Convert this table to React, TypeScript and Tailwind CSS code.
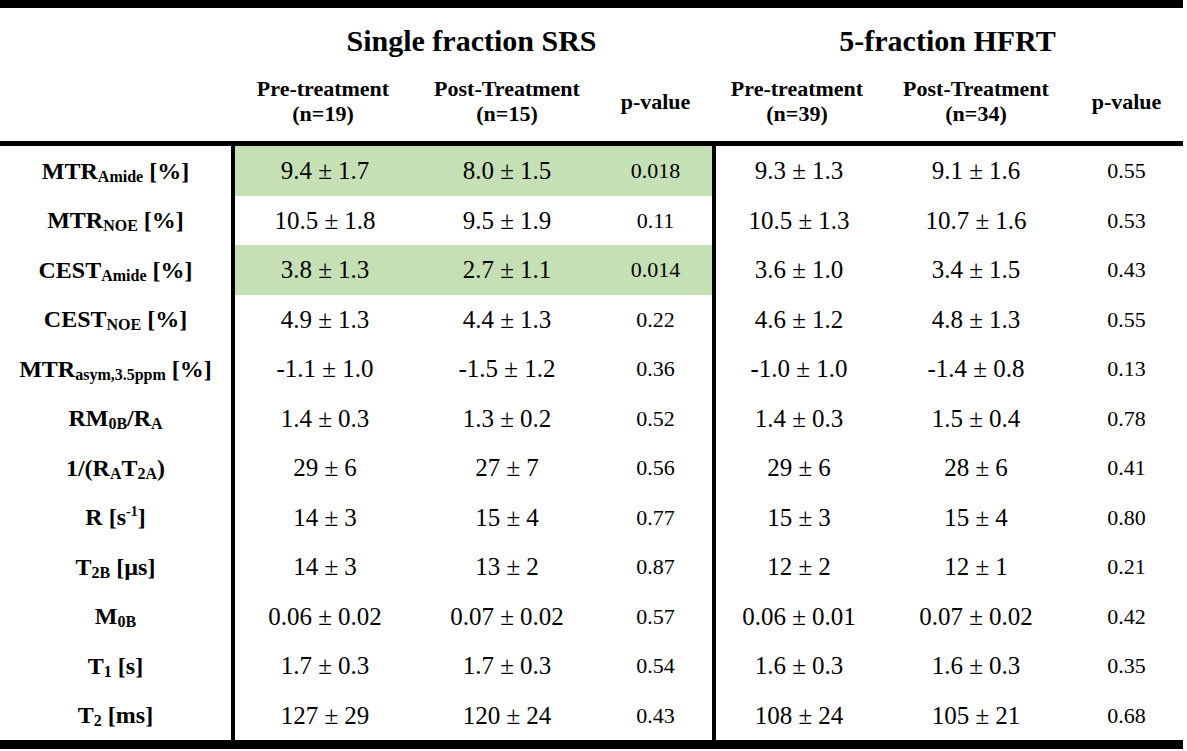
import React from 'react';

const GRID = 'grid grid-cols-[231px_184px_184px_113px_170px_188px_113px]';

type Row = {
  label: React.ReactNode;
  vals: [string, string, string, string, string, string];
  hl?: boolean;
};

const Sub: React.FC<{ children: React.ReactNode }> = ({ children }) => (
  <span className="relative top-[3px] text-[16px]">{children}</span>
);

const Sup: React.FC<{ children: React.ReactNode }> = ({ children }) => (
  <span className="relative top-[-9px] text-[14px]">{children}</span>
);

const ROWS: Row[] = [
  { label: <>MTR<Sub>Amide</Sub> [%]</>, vals: ['9.4 ± 1.7', '8.0 ± 1.5', '0.018', '9.3 ± 1.3', '9.1 ± 1.6', '0.55'], hl: true },
  { label: <>MTR<Sub>NOE</Sub> [%]</>, vals: ['10.5 ± 1.8', '9.5 ± 1.9', '0.11', '10.5 ± 1.3', '10.7 ± 1.6', '0.53'] },
  { label: <>CEST<Sub>Amide</Sub> [%]</>, vals: ['3.8 ± 1.3', '2.7 ± 1.1', '0.014', '3.6 ± 1.0', '3.4 ± 1.5', '0.43'], hl: true },
  { label: <>CEST<Sub>NOE</Sub> [%]</>, vals: ['4.9 ± 1.3', '4.4 ± 1.3', '0.22', '4.6 ± 1.2', '4.8 ± 1.3', '0.55'] },
  { label: <>MTR<Sub>asym,3.5ppm</Sub> [%]</>, vals: ['-1.1 ± 1.0', '-1.5 ± 1.2', '0.36', '-1.0 ± 1.0', '-1.4 ± 0.8', '0.13'] },
  { label: <>RM<Sub>0B</Sub>/R<Sub>A</Sub></>, vals: ['1.4 ± 0.3', '1.3 ± 0.2', '0.52', '1.4 ± 0.3', '1.5 ± 0.4', '0.78'] },
  { label: <>1/(R<Sub>A</Sub>T<Sub>2A</Sub>)</>, vals: ['29 ± 6', '27 ± 7', '0.56', '29 ± 6', '28 ± 6', '0.41'] },
  { label: <>R [s<Sup>-1</Sup>]</>, vals: ['14 ± 3', '15 ± 4', '0.77', '15 ± 3', '15 ± 4', '0.80'] },
  { label: <>T<Sub>2B</Sub> [µs]</>, vals: ['14 ± 3', '13 ± 2', '0.87', '12 ± 2', '12 ± 1', '0.21'] },
  { label: <>M<Sub>0B</Sub></>, vals: ['0.06 ± 0.02', '0.07 ± 0.02', '0.57', '0.06 ± 0.01', '0.07 ± 0.02', '0.42'] },
  { label: <>T<Sub>1</Sub> [s]</>, vals: ['1.7 ± 0.3', '1.7 ± 0.3', '0.54', '1.6 ± 0.3', '1.6 ± 0.3', '0.35'] },
  { label: <>T<Sub>2</Sub> [ms]</>, vals: ['127 ± 29', '120 ± 24', '0.43', '108 ± 24', '105 ± 21', '0.68'] },
];

const SubHead: React.FC<{ top: string; bottom?: string }> = ({ top, bottom }) => (
  <div className="flex flex-col items-center justify-center text-[22px] font-bold leading-[25px]">
    <span>{top}</span>
    {bottom && <span>{bottom}</span>}
  </div>
);

const App: React.FC = () => {
  return (
    <div className="min-h-screen bg-white font-['Liberation_Serif','Tinos','Nimbus_Roman','FreeSerif','Noto_Serif','DejaVu_Serif',Georgia,Times,serif]">
      <div className="w-[1183px] border-t-8 border-b-[9px] border-black text-black">
        <div className="h-[138px] border-b-[5px] border-black">
          <div className={`${GRID} pt-[15px]`}>
            <div />
            <div className="col-span-3 text-center text-[30px] font-bold leading-[36px]">Single fraction SRS</div>
            <div className="col-span-3 text-center text-[30px] font-bold leading-[36px]">5-fraction HFRT</div>
          </div>
          <div className={`${GRID} mt-[17px]`}>
            <div />
            <SubHead top="Pre-treatment" bottom="(n=19)" />
            <SubHead top="Post-Treatment" bottom="(n=15)" />
            <SubHead top="p-value" />
            <SubHead top="Pre-treatment" bottom="(n=39)" />
            <SubHead top="Post-Treatment" bottom="(n=34)" />
            <SubHead top="p-value" />
          </div>
        </div>
        {ROWS.map((row, i) => (
          <div key={i} className={`${GRID} h-[49.5px]`}>
            <div className="flex items-center justify-center whitespace-nowrap text-[24px] font-bold">
              <span>{row.label}</span>
            </div>
            <div className={`flex items-center justify-center border-l-4 border-black text-[25px] ${row.hl ? 'bg-[#c5e0b4]' : ''}`}>
              {row.vals[0]}
            </div>
            <div className={`flex items-center justify-center text-[25px] ${row.hl ? 'bg-[#c5e0b4]' : ''}`}>
              {row.vals[1]}
            </div>
            <div className={`flex items-center justify-center text-[22px] ${row.hl ? 'bg-[#c5e0b4]' : ''}`}>
              {row.vals[2]}
            </div>
            <div className="flex items-center justify-center border-l-4 border-black text-[25px]">{row.vals[3]}</div>
            <div className="flex items-center justify-center text-[25px]">{row.vals[4]}</div>
            <div className="flex items-center justify-center text-[22px]">{row.vals[5]}</div>
          </div>
        ))}
      </div>
    </div>
  );
};

export default App;
